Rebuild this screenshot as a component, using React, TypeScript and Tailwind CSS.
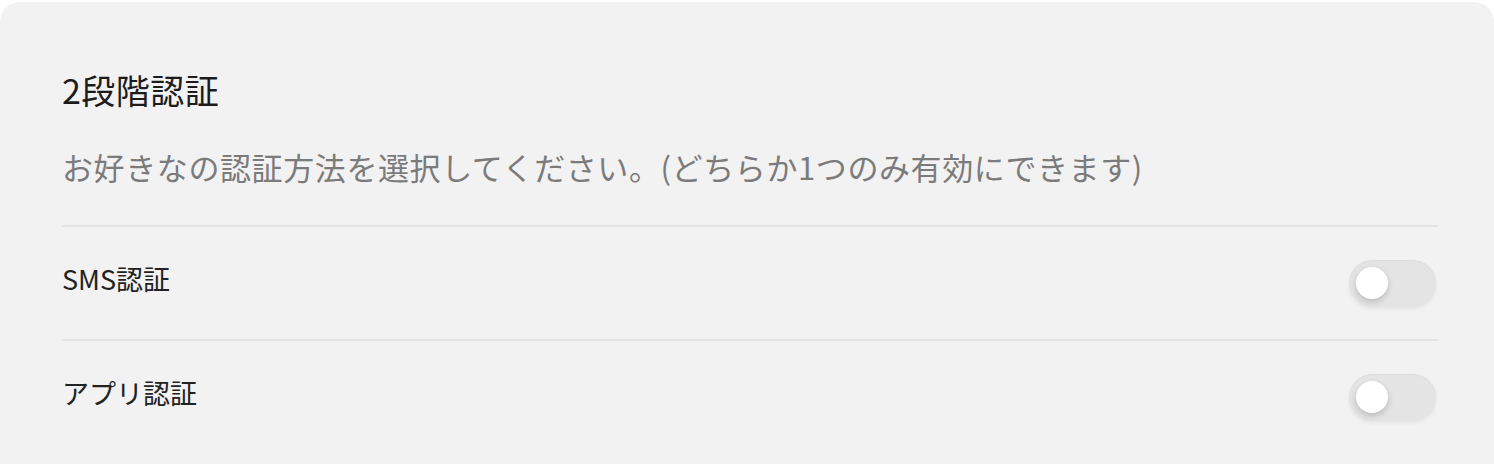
import React from "react";

function Toggle() {
  return (
    <div className="relative mr-[2px] w-[87px] h-[47px] rounded-full bg-[#e4e4e4] shadow-[inset_0_1px_2px_rgba(0,0,0,0.04),0_2px_4px_rgba(0,0,0,0.06)] shrink-0">
      <div className="absolute left-[7px] top-[7px] w-[32px] h-[32px] rounded-full bg-white shadow-[0_3px_6px_rgba(0,0,0,0.18)]" />
    </div>
  );
}

export default function App() {
  const font = { fontFamily: '"Noto Sans CJK JP", "Noto Sans", sans-serif' };
  return (
    <div className="w-[1494px] h-[464px] bg-white overflow-hidden" style={font}>
      <div className="mt-[2px] min-h-[480px] bg-[#f2f2f2] rounded-t-[20px] pl-[62px] pr-[56px] pt-[68px]">
        <div className="text-[34px] leading-[40px] text-[#1c1c1c] font-normal tracking-[0.5px]">2段階認証</div>
        <div className="mt-[37px] text-[31px] leading-[40px] text-[#7b7b7b] tracking-[0.6px]">
          お好きなの認証方法を選択してください。(どちらか1つのみ有効にできます)
        </div>
        <div className="mt-[38px] h-[2px] bg-[#e3e3e3]" />
        <div className="h-[112px] flex items-center justify-between">
          <span className="text-[27px] leading-[36px] text-[#222] -mt-[8px]">SMS認証</span>
          <Toggle />
        </div>
        <div className="h-[2px] bg-[#e3e3e3]" />
        <div className="h-[112px] flex items-center justify-between">
          <span className="text-[27px] leading-[36px] text-[#222] -mt-[8px]">アプリ認証</span>
          <Toggle />
        </div>
      </div>
    </div>
  );
}
